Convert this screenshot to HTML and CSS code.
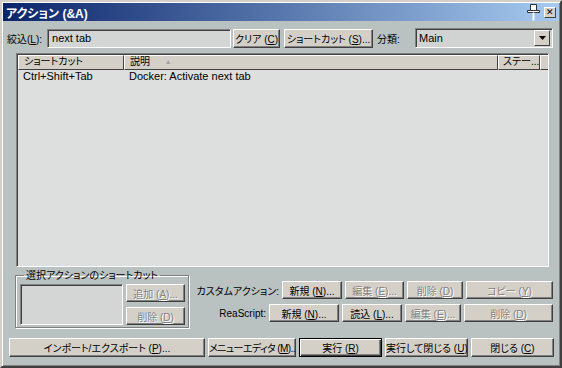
FILE: index.html
```html
<!DOCTYPE html>
<html lang="ja">
<head>
    <meta charset="UTF-8">
    <title>アクション (&amp;A)</title>
    <link rel="stylesheet" href="styles.css">
</head>
<body>
    <div class="window">
        <div class="titlebar">
            <span class="title">アクション (&amp;A)</span>
            <svg class="pin" width="16" height="18" viewBox="0 0 16 18">
                <path d="M4.5 1.5h6v6h-6z M1.5 7.5h12v2h-12z" fill="#fff" stroke="#333" stroke-width="1"/>
                <path d="M7.5 9.5v8" stroke="#fff" stroke-width="2"/>
            </svg>
            <span class="close">✕</span>
        </div>

        <div class="filter-row">
            <label class="lbl">絞込(<u>L</u>):</label>
            <div class="field filter-input">next tab</div>
            <button class="btn w-clear">クリア (<u>C</u>)</button>
            <button class="btn w-short">ショートカット (<u>S</u>)...</button>
            <label class="lbl cat">分類:</label>
            <div class="field select">
                <span>Main</span>
                <span class="drop"><svg width="7" height="4" viewBox="0 0 7 4"><path d="M0 0h7L3.5 4z" fill="#000"/></svg></span>
            </div>
        </div>

        <div class="list">
            <div class="list-head">
                <div class="col c1">ショートカット</div>
                <div class="col c2">説明 <span class="sort">▲</span></div>
                <div class="col c3">ステー...</div>
                <div class="col c4"></div>
            </div>
            <div class="row">
                <span class="c1">Ctrl+Shift+Tab</span>
                <span class="c2">Docker: Activate next tab</span>
            </div>
        </div>

        <div class="lower">
            <fieldset class="group">
                <legend>選択アクションのショートカット</legend>
                <div class="field keys"></div>
                <div class="group-btns">
                    <button class="btn off w-add">追加 (<u>A</u>)...</button>
                    <button class="btn off w-add">削除 (<u>D</u>)</button>
                </div>
            </fieldset>

            <div class="custom">
                <div class="custom-row">
                    <span class="lbl">カスタムアクション:</span>
                    <button class="btn" style="width:60px">新規 (<u>N</u>)...</button>
                    <button class="btn off" style="width:59px">編集 (<u>E</u>)...</button>
                    <button class="btn off" style="width:56px">削除 (<u>D</u>)</button>
                    <button class="btn off" style="width:87px">コピー (<u>Y</u>)</button>
                </div>
                <div class="custom-row">
                    <span class="lbl">ReaScript:</span>
                    <button class="btn" style="width:70px">新規 (<u>N</u>)...</button>
                    <button class="btn" style="width:60px">読込 (<u>L</u>)...</button>
                    <button class="btn off" style="width:56px">編集 (<u>E</u>)...</button>
                    <button class="btn off" style="width:89px">削除 (<u>D</u>)</button>
                </div>
            </div>
        </div>

        <div class="footer">
            <button class="btn" style="width:196px">インポート/エクスポート (<u>P</u>)...</button>
            <button class="btn tight" style="width:88px">メニューエディタ (<u>M</u>)...</button>
            <button class="btn default" style="width:83px">実行 (<u>R</u>)</button>
            <button class="btn" style="width:83px">実行して閉じる (<u>U</u>)</button>
            <button class="btn" style="width:83px">閉じる (<u>C</u>)</button>
        </div>
    </div>
</body>
</html>
```

FILE: styles.css
```css
body {
    margin: 0;
    background: #bac1c1;
    font-family: "Liberation Sans", "Noto Sans CJK JP", sans-serif;
    font-size: 11px;
    font-feature-settings: "palt";
    color: #000;
}

.window {
    width: 562px;
    height: 368px;
    box-sizing: border-box;
    background: #bac1c1;
    border: 2px solid;
    border-color: #d4d0c8 #404040 #404040 #d4d0c8;
    box-shadow: inset 1px 1px #fff, inset -1px -1px #808080;
    padding: 1px;
}

.titlebar {
    height: 18px;
    display: flex;
    align-items: center;
    background: linear-gradient(to right, #0a246a, #a6caf0);
    color: #fff;
    padding: 0 3px 0 3px;
}

.title {
    font-weight: bold;
    font-size: 12px;
    flex: 1;
}

.pin {
    margin-right: 2px;
}

.close {
    width: 12px;
    height: 11px;
    box-sizing: border-box;
    background: #d4d0c8;
    color: #000;
    font-size: 9px;
    line-height: 9px;
    text-align: center;
    border: 1px solid;
    border-color: #fff #404040 #404040 #fff;
}

u {
    text-decoration: underline;
    text-underline-offset: 1px;
}

/* common controls */
.btn {
    height: 19px;
    box-sizing: border-box;
    padding: 0;
    margin: 0;
    font: inherit;
    font-size: 10px;
    font-feature-settings: "palt";
    background: #d4d0c8;
    color: #000;
    border: 1px solid;
    border-color: #fff #404040 #404040 #fff;
    box-shadow: inset -1px -1px #808080;
    white-space: nowrap;
    overflow: hidden;
}

.btn.tight {
    letter-spacing: -0.6px;
}

.btn.off {
    color: #808080;
    text-shadow: 1px 1px #fff;
}

.btn.default {
    border: 1px solid #000;
    box-shadow: inset 1px 1px #fff, inset -1px -1px #404040, inset -2px -2px #808080;
}

.field {
    box-sizing: border-box;
    background: #d3d6d4;
    border: 1px solid;
    border-color: #808080 #fff #fff #808080;
    box-shadow: inset 1px 1px #404040;
}

.lbl {
    white-space: nowrap;
    font-size: 10px;
}

/* filter row */
.filter-row {
    display: flex;
    align-items: center;
    height: 20px;
    margin-top: 7px;
    padding-left: 4px;
}

.filter-input {
    width: 184px;
    height: 19px;
    margin-left: 5px;
    padding: 2px 4px;
    line-height: 13px;
}

.w-clear {
    width: 47px;
    margin-left: 2px;
}

.w-short {
    width: 89px;
    margin-left: 4px;
}

.cat {
    margin-left: 4px;
    width: 38px;
}

.select {
    width: 138px;
    height: 20px;
    display: flex;
    align-items: center;
    justify-content: space-between;
    padding: 0 2px 0 3px;
    background: #d0d3d1;
}

.drop {
    width: 16px;
    height: 16px;
    box-sizing: border-box;
    background: #d4d0c8;
    border: 1px solid;
    border-color: #fff #404040 #404040 #fff;
    display: flex;
    align-items: center;
    justify-content: center;
}

/* list view */
.list {
    margin: 5px 0 0 13px;
    width: 533px;
    height: 214px;
    box-sizing: border-box;
    background: #dcdfdd;
    border: 1px solid;
    border-color: #808080 #fff #fff #808080;
    box-shadow: inset 1px 1px #404040;
    padding: 1px 0 0 1px;
}

.list-head {
    display: flex;
    height: 15px;
}

.col {
    box-sizing: border-box;
    background: #d4d0c8;
    border: 1px solid;
    border-color: #fff #404040 #404040 #fff;
    padding-left: 5px;
    line-height: 12px;
    font-size: 10px;
    white-space: nowrap;
}

.c1 {
    width: 106px;
}

.c2 {
    width: 374px;
}

.c3 {
    width: 42px;
    padding-left: 4px;
}

.c4 {
    flex: 1;
    border-right: none;
}

.sort {
    color: #a0a0a0;
    font-size: 7px;
    margin-left: 12px;
    vertical-align: 1px;
}

.row {
    display: flex;
    height: 13px;
    line-height: 13px;
}

.row span {
    padding-left: 5px;
    box-sizing: border-box;
}

/* lower section */
.lower {
    display: flex;
    margin-top: 2px;
    height: 60px;
}

.group {
    flex: none;
    min-width: 0;
    margin: 0 0 0 12px;
    width: 174px;
    height: 59px;
    box-sizing: border-box;
    padding: 2px 3px 0 4px;
    border: 1px solid #808080;
    box-shadow: 1px 1px #fff, inset 1px 1px #fff;
    display: flex;
    gap: 3px;
}

.group legend {
    padding: 0 2px;
    margin-left: 4px;
    line-height: 13px;
    font-size: 10px;
}

.keys {
    width: 104px;
    height: 41px;
    background: #d3d6d4;
}

.group-btns {
    display: flex;
    flex-direction: column;
    gap: 5px;
}

.w-add {
    width: 59px;
    height: 18px;
}

.custom {
    flex: 1;
    display: flex;
    flex-direction: column;
    gap: 5px;
    padding: 12px 6px 0 0;
}

.custom-row {
    display: flex;
    justify-content: flex-end;
    align-items: center;
    gap: 3px;
}

.custom-row .btn {
    height: 18px;
}

/* footer */
.footer {
    display: flex;
    gap: 3px;
    margin: 9px 0 0 6px;
}
```
